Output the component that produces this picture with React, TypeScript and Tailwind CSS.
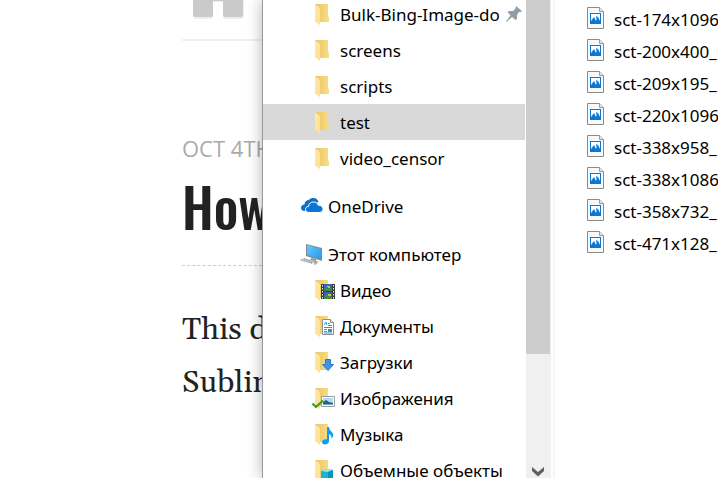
import type { ReactNode } from "react";

function Folder({ children }: { children?: ReactNode }) {
  return (
    <svg viewBox="0 0 24 24" className="h-6 w-6 shrink-0 overflow-visible" aria-hidden="true">
      <defs>
        <linearGradient id="folderBack" x1="0" x2="1" y1="0" y2="0">
          <stop offset="0" stopColor="#e8c662" />
          <stop offset="1" stopColor="#fbdc86" />
        </linearGradient>
        <linearGradient id="folderFront" x1="0" x2="1" y1="0" y2="1">
          <stop offset="0" stopColor="#ffe9a9" />
          <stop offset="1" stopColor="#ffe08c" />
        </linearGradient>
      </defs>
      <path d="M1 2h13v12l1 1v5H1z" fill="url(#folderBack)" />
      <path d="M1 2l5 4v17l-2-1v-1l-3-1z" fill="url(#folderFront)" />
      {children}
    </svg>
  );
}

const Video = () => (
  <Folder>
    <path d="M7 6h14v15H7z" fill="#3a3a3a" />
    <path d="M10 6h8v7h-8z" fill="#3465c0" />
    <path d="M10 14h8v7h-8z" fill="#3465c0" />
    <path d="M10 10h3l2-1 3 2v2h-8zM10 18l3-1 5 2v2h-8z" fill="#3f8a48" />
    <path d="M13 8h3v2h-3zM14 16h3v2h-3z" fill="#e5b72f" />
    <path d="M12 9h2v1h-2zM12 17h2v1h-2z" fill="#d34a2c" />
    <path d="M8.5 7v14M19.5 7v14" stroke="#e8e8e8" strokeDasharray="1.5 1.5" />
  </Folder>
);

const Documents = () => (
  <Folder>
    <path d="M8.500 5.500h8l3 3v12h-11z" fill="#fff" stroke="#8b8f92" />
    <path d="M16.500 5.500v3h3" fill="#eee" stroke="#8b8f92" />
    <path d="M10 11l2-3 1 3M14 9.500h2M14 11.500h4M10 13.500h8" fill="none" stroke="#2c9ad8" />
    <path d="M10 15.500h3M10 17.500h3M10 19h8" stroke="#2c9ad8" />
    <path d="M14 15h4v3h-4z" fill="#3f8fae" />
  </Folder>
);

const Downloads = () => (
  <Folder>
    <path d="M11.500 9.500h5v5h3L14 20.500l-5.500-6h3z" fill="#3d97e4" stroke="#2878c4" />
  </Folder>
);

const Pictures = () => (
  <Folder>
    <path d="M7.500 10.500h13v10h-13z" fill="#fff" stroke="#9a9fa3" />
    <path d="M9 12h10v7H9z" fill="#b5daf5" />
    <path d="M9 16l3-2 3 2 4 1v2H9z" fill="#2f6276" />
    <path d="M9 18h10v1H9z" fill="#6fa9d0" />
    <path d="M-1.500 17.500L2 21l7-6.500" fill="none" stroke="#3fa01f" strokeWidth="2.200" />
  </Folder>
);

const Music = () => (
  <Folder>
    <path d="M13 5h2c0 4 5 5 4 9-.300 1.500-1 2-1.500 3 .300-3-.500-4-2.500-5v7c0 2-2 3.500-4 3.500S8 21.500 8 20s2-3 5-2.700z" fill="#0a9ff2" />
  </Folder>
);

const Objects = () => (
  <Folder>
    <path d="M7 13l6-2 6 1v8l-5 3-7-2z" fill="#19b5d0" />
    <path d="M7 13l6-2 6 1-5 2z" fill="#9be8f2" />
    <path d="M14 14l5-2v8l-5 3z" fill="#0894ae" />
  </Folder>
);

const OneDrive = () => (
  <svg viewBox="0 0 24 16" className="h-4 w-6 shrink-0" aria-hidden="true">
    <path d="M5 13C2.500 13 1 12 1 10c0-2 1.500-3.500 3.500-3.500C4.500 3.500 6.500 2 9 2c.8-1.500 2.500-2 4.500-2 2.500 0 4.300 1.500 5 4L7.500 8z" fill="#0f6fc6" />
    <path d="M9 14.500c-2 0-3.500-1.300-3.500-3 0-1.800 1.200-3 3-3.200C8.800 5.500 11 4 13.500 4c2.300 0 4 1.200 4.800 3.200 2.700 0 4.300 1.300 4.700 3.300.3 2.300-1.200 4-3.700 4z" fill="#0878d8" stroke="#fff" />
  </svg>
);

const Computer = () => (
  <svg viewBox="0 0 24 24" className="h-6 w-6 shrink-0" aria-hidden="true">
    <defs>
      <linearGradient id="screen" x1="0" y1="0" x2="1" y2="1">
        <stop offset="0" stopColor="#6bc9fb" />
        <stop offset="1" stopColor="#259be9" />
      </linearGradient>
    </defs>
    <path d="M6 2l16 4v13L6 14z" fill="#7c8b96" />
    <path d="M7 3l14 4v10L7 13z" fill="url(#screen)" />
    <path d="M11 16l5 1v2l3 1-3 1-6-2z" fill="#8e989e" />
    <path d="M-1 18l5-2 11 3-3 3z" fill="#c9d0d4" />
    <path d="M1 18l11 3M4 17l10 3" stroke="#8b959b" strokeDasharray="1.500 1" />
    <path d="M14 20h3v2l-3 1z" fill="#aab2b7" />
  </svg>
);

const Pin = () => (
  <svg viewBox="0 0 16 16" className="ml-1 h-4 w-4 shrink-0" aria-hidden="true">
    <path d="M10 0l6 5-1.500 1H13l-2 3v4l-1.500 1L6 11l-5.500 5-.5-.500L4.500 9.500 1.500 6 3 5h4l2.500-2.500z" fill="#929da5" />
  </svg>
);

const ImageFile = () => (
  <svg viewBox="0 0 18 22" className="h-[22px] w-[18px] shrink-0" aria-hidden="true">
    <path d="M.500.500h12l4 4v17H.500z" fill="#f8f8f8" stroke="#8a8a8a" />
    <path d="M12.500.500v4h4" fill="#eee" stroke="#9a9a9a" />
    <path d="M3 6h11v11H3z" fill="#0878d7" />
    <path d="M4 7h9v7l-2-4-1 1-1 3-2-4-3 4z" fill="#fff" />
    <path d="M9 10l1-1 1 2-1 2z" fill="#0878d7" />
  </svg>
);

const quickAccess = ["Bulk-Bing-Image-do", "screens", "scripts", "test", "video_censor"];

const libraries = [
  { name: "Видео", Icon: Video },
  { name: "Документы", Icon: Documents },
  { name: "Загрузки", Icon: Downloads },
  { name: "Изображения", Icon: Pictures },
  { name: "Музыка", Icon: Music },
  { name: "Объемные объекты", Icon: Objects },
];

const files = [
  "sct-174x1096_",
  "sct-200x400_",
  "sct-209x195_",
  "sct-220x1096_",
  "sct-338x958_",
  "sct-338x1086_",
  "sct-358x732_",
  "sct-471x128_",
];

function NavItem({ icon, label, root, selected, pinned }: { icon: ReactNode; label: string; root?: boolean; selected?: boolean; pinned?: boolean }) {
  return (
    <li>
      <button
        type="button"
        className={`flex h-9 w-full items-center whitespace-nowrap text-left ${root ? "gap-1 pl-[37px]" : "gap-0.5 pl-[51px]"} ${selected ? "bg-[#d9d9d9]" : ""}`}
      >
        {icon}
        <span className="pt-0.5">{label}</span>
        {pinned && <Pin />}
      </button>
    </li>
  );
}

export default function App() {
  return (
    <div className="flex h-screen overflow-hidden bg-white">
      <article className="w-[262px] shrink-0 overflow-hidden whitespace-nowrap pl-[182px]">
        <header className="h-[41px] border-b-2 border-[#f0f0f0] pl-[10px]">
          <svg viewBox="0 0 54 20" className="h-5 w-[54px]" aria-hidden="true">
            <path d="M1 0h51v16q0 3-3 3H34q-3 0-3-3V2H21v14q0 3-3 3H4q-3 0-3-3z" fill="#eeeeee" />
            <path d="M1 0h50v15q0 2-2 2H33q-2 0-2-2V1H21v14q0 2-2 2H3q-2 0-2-2z" fill="#cacaca" />
          </svg>
        </header>
        <p className="mt-[91px] font-['Open_Sans',sans-serif] text-[22px] leading-8 text-[#aaa]">OCT 4TH</p>
        <h1 className="h-[102px] border-b border-dashed border-[#ccc] font-['Oswald','Liberation_Sans_Narrow',sans-serif] text-[54px] leading-[84px] font-medium text-[#222]">How</h1>
        <p className="mt-[38px] font-['Georgia','Gelasio','Liberation_Serif',serif] text-[31px] leading-[53px] text-[#222]">
          This d
          <br />
          Sublime
        </p>
      </article>

      <main className="flex min-w-0 flex-1 border-l border-[#999] bg-white font-['Noto_Sans',sans-serif] text-[17px] leading-6 text-black shadow-[0_0_14px_rgba(0,0,0,0.3)]">
        <nav className="-mt-1 w-[262px] shrink-0">
          <ul>
            {quickAccess.map((name, i) => (
              <NavItem key={name} icon={<Folder />} label={name} selected={name === "test"} pinned={i === 0} />
            ))}
          </ul>
          <ul className="mt-3">
            <NavItem root icon={<OneDrive />} label="OneDrive" />
          </ul>
          <ul className="mt-3">
            <NavItem root icon={<Computer />} label="Этот компьютер" />
            {libraries.map(({ name, Icon }) => (
              <NavItem key={name} icon={<Icon />} label={name} />
            ))}
          </ul>
        </nav>
        <div className="ml-px flex w-[25px] shrink-0 flex-col justify-between bg-[#f0f0f0]">
          <div className="h-[354px] w-6 bg-[#cdcdcd]" />
          <button type="button" aria-label="Scroll down" className="flex h-6 w-6 items-center justify-center pt-3">
            <svg viewBox="0 0 12 10" className="h-[10px] w-3" aria-hidden="true">
              <path d="M0 0l6 5 6-5v4L6 9.500 0 4z" fill="#606060" />
            </svg>
          </button>
        </div>
        <ul className="ml-0.5 min-w-0 flex-1 overflow-hidden border-l-2 border-[#f5f5f5] pt-0.5 pl-8">
          {files.map((name) => (
            <li key={name}>
              <button type="button" className="flex h-8 items-center gap-[9px] text-left whitespace-nowrap">
                <ImageFile />
                <span className="pt-1">{name}</span>
              </button>
            </li>
          ))}
        </ul>
      </main>
    </div>
  );
}
